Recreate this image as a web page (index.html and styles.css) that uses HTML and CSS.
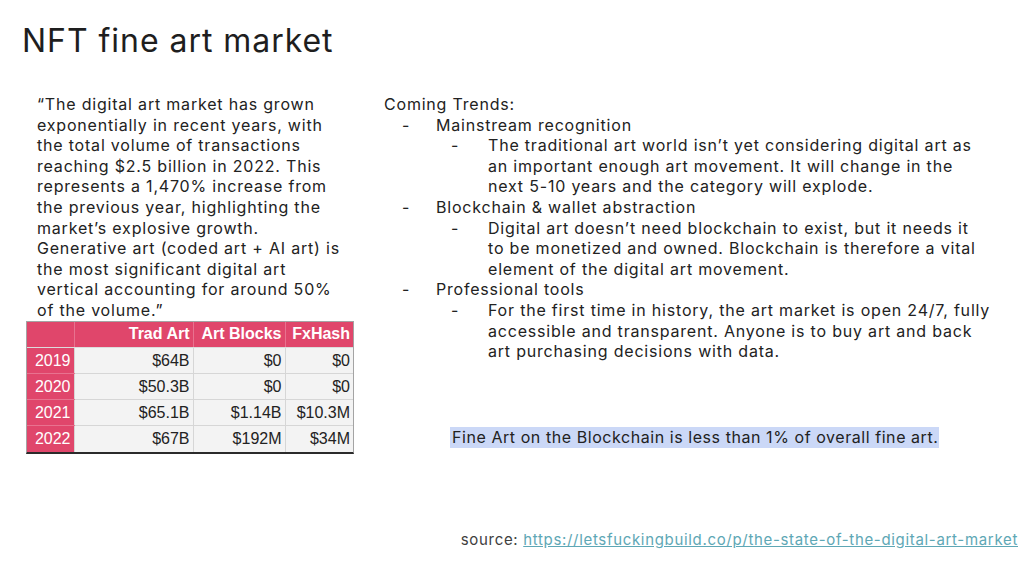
FILE: index.html
```html
<!DOCTYPE html>
<html lang="en">
<head>
<meta charset="utf-8">
<title>NFT fine art market</title>
<link rel="stylesheet" href="styles.css">
</head>
<body>
<main class="slide">
  <h1 class="title">NFT fine art market</h1>
  <div class="content">
    <section class="left">
      <p class="quote">“The digital art market has grown<br>exponentially in recent years, with<br>the total volume of transactions<br>reaching $2.5 billion in 2022. This<br>represents a 1,470% increase from<br>the previous year, highlighting the<br>market’s explosive growth.<br>Generative art (coded art + AI art) is<br>the most significant digital art<br>vertical accounting for around 50%<br>of the volume.”</p>
      <div class="table-frame">
        <table class="data">
          <colgroup>
            <col class="c-year"><col class="c-trad"><col class="c-ab"><col class="c-fx">
          </colgroup>
          <thead>
            <tr><th class="corner"></th><th>Trad Art</th><th>Art Blocks</th><th>FxHash</th></tr>
          </thead>
          <tbody>
            <tr><th class="year">2019</th><td>$64B</td><td>$0</td><td>$0</td></tr>
            <tr><th class="year">2020</th><td>$50.3B</td><td>$0</td><td>$0</td></tr>
            <tr><th class="year">2021</th><td>$65.1B</td><td>$1.14B</td><td>$10.3M</td></tr>
            <tr><th class="year">2022</th><td>$67B</td><td>$192M</td><td>$34M</td></tr>
          </tbody>
        </table>
      </div>
    </section>
    <section class="right">
      <p class="lead">Coming Trends:</p>
      <ul class="l1">
        <li><span>Mainstream recognition</span>
          <ul class="l2">
            <li><span>The traditional art world isn’t yet considering digital art as<br>an important enough art movement. It will change in the<br>next 5-10 years and the category will explode.</span></li>
          </ul>
        </li>
        <li><span>Blockchain &amp; wallet abstraction</span>
          <ul class="l2">
            <li><span>Digital art doesn’t need blockchain to exist, but it needs it<br>to be monetized and owned. Blockchain is therefore a vital<br>element of the digital art movement.</span></li>
          </ul>
        </li>
        <li><span>Professional tools</span>
          <ul class="l2">
            <li><span>For the first time in history, the art market is open 24/7, fully<br>accessible and transparent. Anyone is to buy art and back<br>art purchasing decisions with data.</span></li>
          </ul>
        </li>
      </ul>
      <p class="highlight"><span>Fine Art on the Blockchain is less than 1% of overall fine art.</span></p>
    </section>
  </div>
  <footer class="source">source: <a href="#">https://letsfuckingbuild.co/p/the-state-of-the-digital-art-market</a></footer>
</main>
</body>
</html>
```
FILE: styles.css
```css
* { box-sizing: border-box; }
html, body { margin: 0; padding: 0; background: #ffffff; }
body {
  font-family: Inter, "Noto Sans", "DejaVu Sans", sans-serif;
  color: #222222;
}
.slide {
  width: 1024px;
  height: 571px;
  display: flex;
  flex-direction: column;
  overflow: hidden;
}
.title {
  margin: 0;
  padding: 21px 0 0 22px;
  font-size: 32px;
  line-height: 40px;
  font-weight: 400;
  letter-spacing: 0.03em;
  color: #1e1e1e;
}
.content {
  display: flex;
  margin-top: 33px;
}
.left {
  width: 358px;
  padding-left: 26px;
}
.quote {
  margin: 0 0 0 11px;
  font-size: 16px;
  line-height: 20.6px;
  letter-spacing: 0.05em;
  white-space: nowrap;
}
.table-frame {
  display: inline-block;
  border: 1px solid #a4a4a4;
  border-bottom: 2px solid #2b2b2b;
}
.data {
  border-collapse: collapse;
  font-family: "Liberation Sans", Arial, sans-serif;
  font-size: 16px;
  color: #222;
  table-layout: fixed;
}
.c-year { width: 47px; }
.c-trad { width: 119px; }
.c-ab { width: 92px; }
.c-fx { width: 68px; }
.data th, .data td {
  height: 26px;
  padding: 0 3px 0 0;
  text-align: right;
  white-space: nowrap;
}
.data thead th {
  background: #e0466b;
  color: #ffffff;
  font-weight: 700;
  border-left: 1px solid #e8728f;
  border-bottom: 1px solid #dcdcdc;
}
.data thead th.corner { border-left: none; }
.data th.year {
  background: #e0466b;
  color: #ffffff;
  font-weight: 400;
  border-bottom: 1px solid #e8728f;
}
.data tbody tr:last-child th.year,
.data tbody tr:last-child td { border-bottom: none; }
.data td {
  background: #f3f3f3;
  border-left: 1px solid #d6d6d6;
  border-bottom: 1px solid #d6d6d6;
}
.right {
  flex: 1;
  padding-left: 26px;
  font-size: 16px;
  line-height: 20.6px;
  letter-spacing: 0.05em;
}
.lead { margin: 0; }
.l1, .l2 {
  list-style: none;
  margin: 0;
  white-space: nowrap;
}
.l1 { padding-left: 18px; }
.l2 { padding-left: 15px; }
.l1 > li { display: grid; grid-template-columns: 34px 1fr; }
.l2 > li { display: grid; grid-template-columns: 37px 1fr; }
.l1 > li::before, .l2 > li::before { content: "-"; grid-row: 1; grid-column: 1; }
.l1 > li > span, .l1 > li > ul, .l2 > li > span { grid-column: 2; }
.highlight {
  margin: 65px 0 0 66px;
}
.highlight span {
  display: inline-block;
  background: #cbd8f7;
  line-height: 21px;
  padding: 0 1px 0 2px;
  letter-spacing: 0.035em;
}
.source {
  margin-top: auto;
  padding: 0 6px 21px 0;
  text-align: right;
  font-size: 15px;
  line-height: 20px;
  letter-spacing: 0.045em;
  color: #404040;
}
.source a {
  color: #5ea7b5;
  text-decoration: underline;
}
```
